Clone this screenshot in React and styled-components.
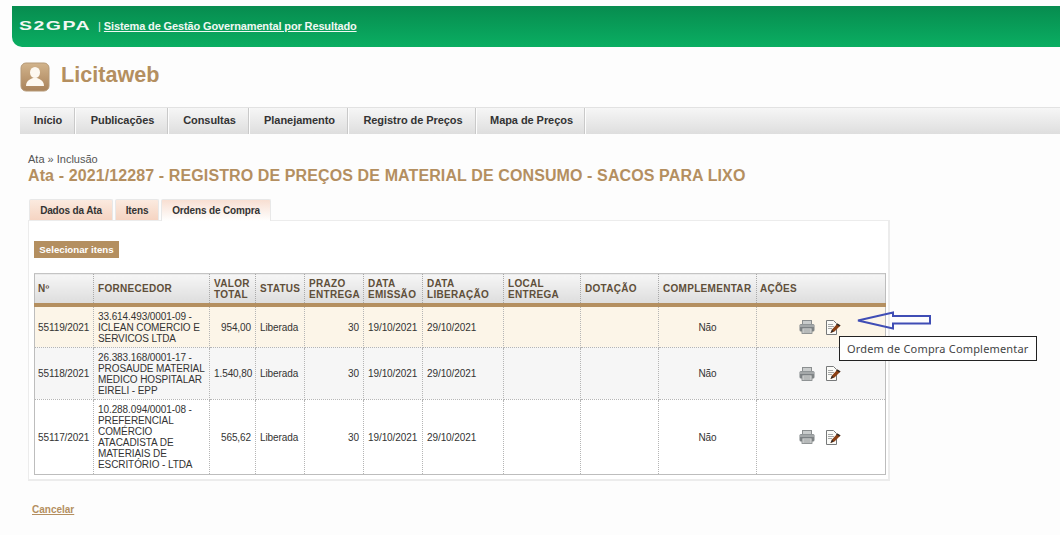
import React from "react";
import styled, { createGlobalStyle } from "styled-components";

const GlobalStyle = createGlobalStyle`
  html, body {
    margin: 0;
    padding: 0;
    background: #fdfdfd;
    font-family: "Liberation Sans", Arial, sans-serif;
    overflow: hidden;
  }
`;

const menu = [
  ["Início", 56],
  ["Publicações", 93],
  ["Consultas", 81],
  ["Planejamento", 99],
  ["Registro de Preços", 128],
  ["Mapa de Preços", 109],
];

const columns = [
  { label: "Nº", width: 59 },
  { label: "FORNECEDOR", width: 116 },
  { label: "VALOR TOTAL", width: 46 },
  { label: "STATUS", width: 49 },
  { label: "PRAZO ENTREGA", width: 59 },
  { label: "DATA EMISSÃO", width: 59 },
  { label: "DATA LIBERAÇÃO", width: 81 },
  { label: "LOCAL ENTREGA", width: 77 },
  { label: "DOTAÇÃO", width: 78 },
  { label: "COMPLEMENTAR", width: 98 },
  { label: "AÇÕES", width: 129 },
];

const rows = [
  {
    id: "55119/2021",
    supplier: "33.614.493/0001-09 - ICLEAN COMERCIO E SERVICOS LTDA",
    total: "954,00",
    height: 41,
  },
  {
    id: "55118/2021",
    supplier: "26.383.168/0001-17 - PROSAUDE MATERIAL MEDICO HOSPITALAR EIRELI - EPP",
    total: "1.540,80",
    height: 52,
  },
  {
    id: "55117/2021",
    supplier: "10.288.094/0001-08 - PREFERENCIAL COMÉRCIO ATACADISTA DE MATERIAIS DE ESCRITÓRIO - LTDA",
    total: "565,62",
    height: 75,
  },
];

function PrinterIcon() {
  return (
    <svg width="16" height="14" viewBox="0 0 16 14">
      <rect x="3.5" y="0.5" width="9" height="5" fill="#c9cccc" stroke="#8b8f90" />
      <rect x="0.5" y="4" width="15" height="7.5" rx="1.5" fill="#7f8486" />
      <rect x="1" y="4.5" width="14" height="2.5" fill="#a4a8a9" />
      <rect x="3" y="8" width="10" height="5.5" fill="#d4d6d6" stroke="#7b7f80" strokeWidth="0.8" />
      <path d="M4.5 10h7M4.5 12h7" stroke="#8b8f90" strokeWidth="0.8" />
    </svg>
  );
}

function NoteIcon() {
  return (
    <svg width="16" height="15" viewBox="0 0 16 15">
      <path d="M1.5 0.5H8.5L11.5 3.5V14.5H1.5Z" fill="#fbfbf8" stroke="#77797a" />
      <path d="M3 4.5H8M3 6.5H9M3 8.5H7" stroke="#a6a8a8" />
      <path d="M5.5 13L7 9.5L12.5 3.5L15.5 5.5L9.5 11.5Z" fill="#8a3f14" />
      <path d="M11.5 4.5L12.5 3.5L15.5 5.5L14.5 6.5Z" fill="#2d2a26" />
      <path d="M5.5 13L7 9.5L8.5 11.5Z" fill="#2a2a2a" />
    </svg>
  );
}

function UserIcon() {
  return (
    <svg width="30" height="30" viewBox="0 0 30 30">
      <defs>
        <linearGradient id="badge" x1="0" y1="0" x2="0" y2="1">
          <stop offset="0" stopColor="#d2b48c" />
          <stop offset="1" stopColor="#a9825a" />
        </linearGradient>
      </defs>
      <rect x="1" y="1" width="28" height="28" rx="5" fill="url(#badge)" stroke="#b69a78" />
      <ellipse cx="15" cy="10.5" rx="5" ry="5.5" fill="#fdf8f0" />
      <path d="M6 24C6 19 10 17 13 16H17C20 17 24 19 24 24Z" fill="#fdf8f0" />
    </svg>
  );
}

function ArrowMark() {
  return (
    <svg width="76" height="20" viewBox="0 0 76 20">
      <path
        d="M2 9.5L37 1.5V5H74V12.5H37V17.5Z"
        fill="none"
        stroke="#3f4db5"
        strokeWidth="2"
      />
    </svg>
  );
}

export default function App() {
  return (
    <Page>
      <GlobalStyle />
      <TopBar>
        <Logo>S2GPA</Logo>
        <Separator>|</Separator>
        <SystemLink href="#">Sistema de Gestão Governamental por Resultado</SystemLink>
      </TopBar>

      <Brand>
        <UserIcon />
        <BrandName>Licitaweb</BrandName>
      </Brand>

      <Nav>
        {menu.map(([label, width]) => (
          <NavItem key={label} $width={width}>
            {label}
          </NavItem>
        ))}
      </Nav>

      <Content>
        <Breadcrumb>Ata » Inclusão</Breadcrumb>
        <Heading>Ata - 2021/12287 - REGISTRO DE PREÇOS DE MATERIAL DE CONSUMO - SACOS PARA LIXO</Heading>

        <Tabs>
          <Tab $width={84}>Dados da Ata</Tab>
          <Tab $width={44}>Itens</Tab>
          <Tab $width={110} $active>
            Ordens de Compra
          </Tab>
        </Tabs>

        <Panel>
          <SelectButton>Selecionar itens</SelectButton>
          <Grid>
            <colgroup>
              {columns.map((c) => (
                <col key={c.label} width={c.width} />
              ))}
            </colgroup>
            <thead>
              <tr>
                {columns.map((c) => (
                  <Th key={c.label}>{c.label}</Th>
                ))}
              </tr>
            </thead>
            <tbody>
              {rows.map((r, i) => (
                <Row key={r.id} $height={r.height} $highlight={i === 0}>
                  <Td>{r.id}</Td>
                  <Td>{r.supplier}</Td>
                  <Td $align="right">{r.total}</Td>
                  <Td>Liberada</Td>
                  <Td $align="right">30</Td>
                  <Td>19/10/2021</Td>
                  <Td>29/10/2021</Td>
                  <Td />
                  <Td />
                  <Td $align="center">Não</Td>
                  <Td>
                    <Actions>
                      <PrinterIcon />
                      <NoteIcon />
                    </Actions>
                  </Td>
                </Row>
              ))}
            </tbody>
          </Grid>
        </Panel>

        <CancelLink href="#">Cancelar</CancelLink>
      </Content>

      <Arrow>
        <ArrowMark />
      </Arrow>
      <Tooltip>Ordem de Compra Complementar</Tooltip>
    </Page>
  );
}

const Page = styled.div`
  position: relative;
  width: 1060px;
  height: 535px;
  padding-top: 6px;
  box-sizing: border-box;
  overflow: hidden;
`;

const TopBar = styled.div`
  display: flex;
  align-items: center;
  height: 41px;
  margin-left: 12px;
  padding: 0 0 2px 7px;
  box-sizing: border-box;
  border-bottom-left-radius: 10px;
  background: linear-gradient(#078c4f, #0aae62);
`;

const Logo = styled.span`
  display: inline-block;
  width: 72px;
  font-size: 13px;
  font-weight: bold;
  letter-spacing: 1px;
  color: #f2f7f4;
  transform: scaleX(1.5);
  transform-origin: left center;
`;

const Separator = styled.span`
  margin: 0 3px 0 7px;
  font-size: 11px;
  color: #e4f3ea;
`;

const SystemLink = styled.a`
  font-size: 11px;
  font-weight: bold;
  letter-spacing: -0.13px;
  color: #f0f8f3;
`;

const Brand = styled.div`
  display: flex;
  align-items: center;
  gap: 11px;
  height: 30px;
  margin: 15px 0 0 20px;
`;

const BrandName = styled.div`
  margin-top: -5px;
  font-size: 21.6px;
  font-weight: bold;
  color: #b48f60;
`;

const Nav = styled.nav`
  display: flex;
  height: 27px;
  margin: 15px 0 0 20px;
  background: linear-gradient(#f6f6f6, #dedede);
  border-top: 1px solid #e2e2e2;
  box-sizing: border-box;
`;

const NavItem = styled.div`
  display: flex;
  align-items: center;
  justify-content: center;
  width: ${(p) => p.$width}px;
  padding: 0 0 2px 1px;
  box-sizing: border-box;
  border-right: 1px solid #fdfdfd;
  box-shadow: inset -1px 0 0 #c9c9c9;
  font-size: 11px;
  font-weight: bold;
  letter-spacing: -0.06px;
  color: #333;
`;

const Content = styled.div`
  display: flex;
  flex-direction: column;
  align-items: flex-start;
  padding: 19px 0 0 28px;
`;

const Breadcrumb = styled.div`
  font-size: 11px;
  line-height: 12px;
  color: #555;
`;

const Heading = styled.h1`
  margin: 1px 0 0;
  font-size: 16px;
  line-height: 19px;
  font-weight: bold;
  letter-spacing: 0.11px;
  color: #b48f60;
`;

const Tabs = styled.div`
  display: flex;
  gap: 2px;
  height: 21px;
  margin: 14px 0 0 1px;
`;

const Tab = styled.div`
  display: flex;
  align-items: center;
  justify-content: center;
  width: ${(p) => p.$width}px;
  box-sizing: border-box;
  border: 1px solid #e8e8e8;
  border-bottom: 0;
  border-radius: 2px 2px 0 0;
  background: ${(p) =>
    p.$active ? "linear-gradient(#f8dfd2, #ffffff)" : "linear-gradient(#fbeadf, #f5d4c2)"};
  font-size: 10px;
  font-weight: bold;
  letter-spacing: -0.15px;
  color: #333;
  ${(p) => p.$active && "height: 22px; position: relative; z-index: 1;"}
`;

const Panel = styled.div`
  display: flex;
  flex-direction: column;
  align-items: flex-start;
  width: 862px;
  box-sizing: border-box;
  padding: 20px 4px 4px;
  border: 2px solid #ececec;
  border-width: 1px 2px 2px 1px;
  background: #fff;
`;

const SelectButton = styled.div`
  display: flex;
  align-items: center;
  justify-content: center;
  width: 85px;
  height: 17px;
  margin-left: 1px;
  background: #b48f60;
  font-size: 9.7px;
  font-weight: bold;
  color: #fff;
`;

const Grid = styled.table`
  width: 851px;
  margin: 15px 0 0 1px;
  table-layout: fixed;
  border-collapse: collapse;
  border: 1px solid #bdbdbd;
  border-top: 1px solid #c4c4c4;
  font-size: 10px;
  letter-spacing: -0.09px;
  color: #333;
`;

const Th = styled.th`
  height: 31px;
  padding: 1px 2px 0 4px;
  box-sizing: border-box;
  border-right: 1px dotted #a9a9a9;
  border-bottom: 4px solid #b48f60;
  background: linear-gradient(#f6f6f6, #dddddd);
  font-size: 10px;
  line-height: 11px;
  font-weight: bold;
  letter-spacing: 0.3px;
  text-align: left;
  color: #5f4f3a;
  &:first-child {
    padding-left: 3px;
  }
  &:last-child {
    border-right: 0;
    padding-left: 3px;
  }
`;

const Row = styled.tr`
  height: ${(p) => p.$height}px;
  background: ${(p) => (p.$highlight ? "#fcf5e8" : "#f6f6f6")};
  &:last-child {
    background: #fff;
  }
`;

const Td = styled.td`
  padding: 4px 1px 3px 4px;
  box-sizing: border-box;
  border-right: 1px dotted #b5b5b5;
  border-bottom: 1px dotted #b5b5b5;
  line-height: 11px;
  text-align: ${(p) => p.$align || "left"};
  &:first-child {
    padding-left: 3px;
  }
  &:nth-child(3),
  &:nth-child(5),
  &:nth-child(10) {
    padding-right: 4px;
  }
  &:last-child {
    border-right: 0;
  }
  tr:last-child & {
    border-bottom: 0;
  }
`;

const Actions = styled.div`
  display: flex;
  align-items: center;
  gap: 10px;
  padding: 0 0 0 38px;
`;

const CancelLink = styled.a`
  margin: 23px 0 0 4px;
  font-size: 10px;
  font-weight: bold;
  color: #b48f60;
`;

const Arrow = styled.div`
  position: absolute;
  left: 856px;
  top: 311px;
  line-height: 0;
`;

const Tooltip = styled.div`
  position: absolute;
  left: 839px;
  top: 336px;
  display: flex;
  align-items: center;
  width: 198px;
  height: 25px;
  padding-left: 7px;
  box-sizing: border-box;
  border: 1px solid #222;
  background: #fff;
  font-family: "Noto Sans", "Open Sans", sans-serif;
  font-size: 11px;
  letter-spacing: 0.18px;
  color: #444;
`;
